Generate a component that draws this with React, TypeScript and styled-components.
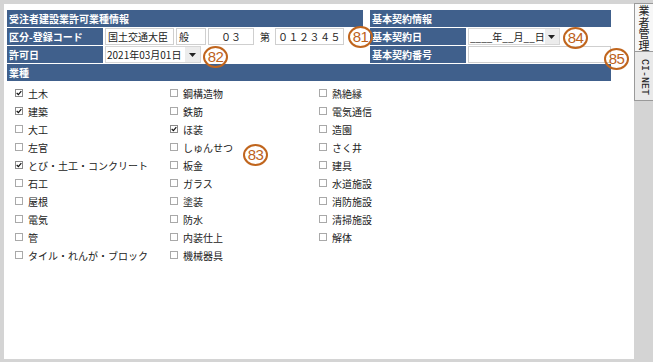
import React from "react";
import styled, { createGlobalStyle } from "styled-components";

const GlobalStyle = createGlobalStyle`
  html, body { margin: 0; padding: 0; background: #d4d4d4; }
  body { font-family: "Noto Sans CJK JP", "Noto Sans", sans-serif; }
  * { box-sizing: border-box; }
`;

const Page = styled.div`
  display: flex;
  align-items: flex-start;
  width: 653px;
  height: 362px;
  background: #d4d4d4;
  overflow: hidden;
`;

const Panel = styled.div`
  position: relative;
  width: 630px;
  height: 355px;
  margin: 4px 0 0 4px;
  padding: 6px 23px 0 3px;
  background: #ffffff;
`;

const TopArea = styled.div`
  display: flex;
  gap: 7px;
`;

const Section = styled.div<{ $w: number }>`
  width: ${(p) => p.$w}px;
  display: flex;
  flex-direction: column;
  gap: 1px;
`;

const Bar = styled.div`
  height: 17px;
  background: #40608c;
  color: #ffffff;
  font-size: 10px;
  font-weight: 700;
  line-height: 17px;
  padding-left: 2px;
  white-space: nowrap;
`;

const CategoryBar = styled(Bar)`
  margin-top: 1px;
`;

const Row = styled.div`
  display: flex;
  align-items: stretch;
  height: 17px;
  gap: 1px;
`;

const Label = styled.div`
  width: 96px;
  flex: none;
  background: #40608c;
  color: #ffffff;
  font-size: 10px;
  font-weight: 700;
  line-height: 17px;
  padding-left: 2px;
  white-space: nowrap;
`;

const Fields = styled.div`
  display: flex;
  align-items: stretch;
  gap: 2px;
  flex: 1;
  padding-left: 1px;
`;

const TextBox = styled.div<{ $w?: number; $spaced?: boolean }>`
  width: ${(p) => (p.$w ? `${p.$w}px` : "auto")};
  flex: ${(p) => (p.$w ? "none" : "1")};
  border: 1px solid #cfcfcf;
  background: #fff;
  font-size: 10px;
  line-height: 15px;
  color: #222;
  padding-left: 2px;
  white-space: nowrap;
  letter-spacing: ${(p) => (p.$spaced ? "0.5px" : "0")};
`;

const Inline = styled.span`
  font-size: 10px;
  line-height: 17px;
  color: #222;
  padding: 0 3px 0 4px;
`;

const Select = styled.div<{ $w: number }>`
  width: ${(p) => p.$w}px;
  flex: none;
  display: flex;
  border: 1px solid #d6d6d6;
  background: #fff;
  font-size: 10px;
  line-height: 15px;
  color: #222;
`;

const SelectText = styled.span`
  flex: 1;
  padding-left: 1px;
  white-space: nowrap;
`;

const Arrow = styled.span`
  width: 15px;
  background: #ececec;
  display: flex;
  align-items: center;
  justify-content: center;
`;

const CheckGrid = styled.div`
  display: grid;
  grid-auto-flow: column;
  grid-template-rows: repeat(10, 18px);
  grid-template-columns: 155px 149px 1fr;
  padding: 3px 0 0 8px;
`;

const CheckItem = styled.label`
  display: flex;
  align-items: center;
  gap: 5px;
  font-size: 10px;
  color: #222;
  white-space: nowrap;
`;

const Box = styled.span<{ $checked: boolean }>`
  width: 8px;
  height: 8px;
  flex: none;
  border: 1px solid ${(p) => (p.$checked ? "#8a8a8a" : "#a9a9a9")};
  background: #fff;
  display: flex;
  align-items: center;
  justify-content: center;
`;

const Mark = styled.div<{ $x: number; $y: number }>`
  position: absolute;
  left: ${(p) => p.$x}px;
  top: ${(p) => p.$y}px;
  width: 25px;
  height: 22px;
  border: 2px solid #c0651d;
  border-radius: 50%;
  color: #bd621c;
  font-family: "Liberation Sans", Arial, sans-serif;
  font-size: 15px;
  line-height: 18px;
  text-align: center;
  letter-spacing: -0.5px;
`;

const SideTabs = styled.div`
  display: flex;
  flex-direction: column;
  margin-top: 3px;
  width: 19px;
`;

const Tab = styled.div<{ $active?: boolean }>`
  height: 49px;
  border: 1px solid #9a9a9a;
  border-right: none;
  border-top: ${(p) => (p.$active ? "1px solid #9a9a9a" : "none")};
  background: ${(p) => (p.$active ? "#f7f7f7" : "#e9e9e9")};
  padding-top: ${(p) => (p.$active ? "1px" : "7px")};
  color: #222;
`;

const StackText = styled.div`
  width: 12px;
  margin: 0 auto;
  font-family: "Noto Sans CJK JP", sans-serif;
  font-size: 11px;
  line-height: 11.5px;
  word-break: break-all;
  text-align: center;
`;

const SideText = styled.div`
  writing-mode: vertical-rl;
  margin: 0 auto;
  font-family: "Liberation Mono", monospace;
  font-size: 10px;
  line-height: 17px;
`;

const Check = () => (
  <svg width="7" height="6" viewBox="0 0 7 6">
    <path d="M0.8 3 L2.8 5 L6.2 0.8" fill="none" stroke="#111" strokeWidth="1.4" />
  </svg>
);

const ArrowIcon = () => (
  <svg width="7" height="4" viewBox="0 0 7 4">
    <path d="M0 0 H7 L3.5 4 Z" fill="#222" />
  </svg>
);

const items: [string, boolean][] = [
  ["土木", true],
  ["建築", true],
  ["大工", false],
  ["左官", false],
  ["とび・土工・コンクリート", true],
  ["石工", false],
  ["屋根", false],
  ["電気", false],
  ["管", false],
  ["タイル・れんが・ブロック", false],
  ["鋼構造物", false],
  ["鉄筋", false],
  ["ほ装", true],
  ["しゅんせつ", false],
  ["板金", false],
  ["ガラス", false],
  ["塗装", false],
  ["防水", false],
  ["内装仕上", false],
  ["機械器具", false],
  ["熱絶縁", false],
  ["電気通信", false],
  ["造園", false],
  ["さく井", false],
  ["建具", false],
  ["水道施設", false],
  ["消防施設", false],
  ["清掃施設", false],
  ["解体", false],
];

export default function App() {
  return (
    <>
      <GlobalStyle />
      <Page>
        <Panel>
          <TopArea>
            <Section $w={356}>
              <Bar>受注者建設業許可業種情報</Bar>
              <Row>
                <Label>区分-登録コード</Label>
                <Fields>
                  <TextBox $w={69}>国土交通大臣</TextBox>
                  <TextBox $w={30}>般</TextBox>
                  <TextBox $w={46}>　０３</TextBox>
                  <Inline>第</Inline>
                  <TextBox $w={69} $spaced>
                    ０１２３４５
                  </TextBox>
                </Fields>
              </Row>
              <Row>
                <Label>許可日</Label>
                <Fields>
                  <Select $w={96}>
                    <SelectText>2021年03月01日</SelectText>
                    <Arrow>
                      <ArrowIcon />
                    </Arrow>
                  </Select>
                </Fields>
              </Row>
            </Section>
            <Section $w={241}>
              <Bar>基本契約情報</Bar>
              <Row>
                <Label>基本契約日</Label>
                <Fields>
                  <Select $w={92}>
                    <SelectText>____年__月__日</SelectText>
                    <Arrow>
                      <ArrowIcon />
                    </Arrow>
                  </Select>
                </Fields>
              </Row>
              <Row>
                <Label>基本契約番号</Label>
                <Fields>
                  <TextBox />
                </Fields>
              </Row>
            </Section>
          </TopArea>
          <CategoryBar>業種</CategoryBar>
          <CheckGrid>
            {items.map(([name, checked]) => (
              <CheckItem key={name}>
                <Box $checked={checked}>{checked && <Check />}</Box>
                {name}
              </CheckItem>
            ))}
          </CheckGrid>
          <Mark $x={344} $y={22}>81</Mark>
          <Mark $x={199} $y={42}>82</Mark>
          <Mark $x={239} $y={140}>83</Mark>
          <Mark $x={559} $y={23}>84</Mark>
          <Mark $x={600} $y={44}>85</Mark>
        </Panel>
        <SideTabs>
          <Tab $active>
            <StackText>業者管理</StackText>
          </Tab>
          <Tab>
            <SideText>CI-NET</SideText>
          </Tab>
        </SideTabs>
      </Page>
    </>
  );
}
